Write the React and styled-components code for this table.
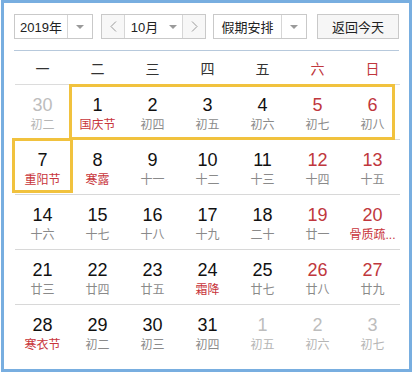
import React from "react";
import styled, { createGlobalStyle } from "styled-components";

const Global = createGlobalStyle`
  html, body { margin: 0; padding: 0; background: #fff; }
  body { font-family: "Liberation Sans", Arial, "Noto Sans CJK SC", sans-serif; }
`;

const Frame = styled.div`
  box-sizing: border-box;
  width: 411px;
  height: 372px;
  margin-left: 1px;
  border: 3px solid #78aee0;
  padding: 11px 10px 0 10px;
  background: #fff;
`;

const Toolbar = styled.div`
  display: flex;
  height: 25px;
  align-items: stretch;
`;

const Box = styled.div`
  box-sizing: border-box;
  display: flex;
  align-items: stretch;
  width: ${(p) => p.$w}px;
  margin-left: ${(p) => p.$ml || 0}px;
  border: 1px solid #c9c9c9;
  background: ${(p) => p.$bg || "#fff"};
  font-size: 13px;
  color: #222;
`;

const Label = styled.div`
  flex: 1;
  display: flex;
  align-items: center;
  justify-content: center;
`;

const Caret = styled.div`
  width: ${(p) => p.$w || 23}px;
  display: flex;
  align-items: center;
  justify-content: center;
  border-left: ${(p) => (p.$sep ? "1px solid #d6d6d6" : "none")};
  &::after {
    content: "";
    border-left: 4px solid transparent;
    border-right: 4px solid transparent;
    border-top: 4px solid #9a9a9a;
  }
`;

const Nav = styled.div`
  width: 22px;
  display: flex;
  align-items: center;
  justify-content: center;
  background: #f7f7f7;
  ${(p) => (p.$left ? "border-right: 1px solid #d6d6d6;" : "border-left: 1px solid #d6d6d6;")}
`;

const Divider = styled.div`
  height: 1px;
  background: #b7c9dc;
  margin-top: 11px;
`;

const Grid = styled.div`
  position: relative;
  display: grid;
  grid-template-columns: repeat(7, 55px);
  margin-left: 1px;
`;

const WeekHead = styled.div`
  height: 33px;
  display: flex;
  align-items: center;
  justify-content: center;
  font-size: 14px;
  color: ${(p) => (p.$red ? "#c0373d" : "#333")};
  border-bottom: 1px solid #dcdcdc;
`;

const Cell = styled.div`
  height: 55px;
  box-sizing: border-box;
  border-bottom: ${(p) => (p.$last ? "none" : "1px solid #d8d8d8")};
  display: flex;
  flex-direction: column;
  align-items: center;
  padding-top: 9px;
`;

const Num = styled.div`
  font-size: 18px;
  line-height: 22px;
  color: ${(p) => p.$c};
`;

const Lunar = styled.div`
  font-size: 12px;
  line-height: 16px;
  margin-top: 1px;
  color: ${(p) => p.$c};
  white-space: nowrap;
`;

const Highlight = styled.div`
  position: absolute;
  box-sizing: border-box;
  border: 3px solid #f1c23e;
  pointer-events: none;
`;

const weeks = ["一", "二", "三", "四", "五", "六", "日"];

const rows = [
  [["30", "初二", "o"], ["1", "国庆节", "f"], ["2", "初四"], ["3", "初五"], ["4", "初六"], ["5", "初七"], ["6", "初八"]],
  [["7", "重阳节", "f"], ["8", "寒露", "f"], ["9", "十一"], ["10", "十二"], ["11", "十三"], ["12", "十四"], ["13", "十五"]],
  [["14", "十六"], ["15", "十七"], ["16", "十八"], ["17", "十九"], ["18", "二十"], ["19", "廿一"], ["20", "骨质疏...", "f"]],
  [["21", "廿三"], ["22", "廿四"], ["23", "廿五"], ["24", "霜降", "f"], ["25", "廿七"], ["26", "廿八"], ["27", "廿九"]],
  [["28", "寒衣节", "f"], ["29", "初二"], ["30", "初三"], ["31", "初四"], ["1", "初五", "o"], ["2", "初六", "o"], ["3", "初七", "o"]],
];

export default function App() {
  return (
    <>
      <Global />
      <Frame>
        <Toolbar>
          <Box $w={79}>
            <Label>2019年</Label>
            <Caret $sep $w={24} />
          </Box>
          <Box $w={105} $ml={8}>
            <Nav $left>
              <svg width="7" height="11" viewBox="0 0 7 11"><path d="M6 0.5 L1 5.5 L6 10.5" fill="none" stroke="#999" strokeWidth="1" /></svg>
            </Nav>
            <Label>10月</Label>
            <Caret $w={18} />
            <Nav>
              <svg width="7" height="11" viewBox="0 0 7 11"><path d="M1 0.5 L6 5.5 L1 10.5" fill="none" stroke="#999" strokeWidth="1" /></svg>
            </Nav>
          </Box>
          <Box $w={94} $ml={7}>
            <Label>假期安排</Label>
            <Caret $sep $w={24} />
          </Box>
          <Box $w={82} $ml={10} $bg="#f6f6f6">
            <Label>返回今天</Label>
          </Box>
        </Toolbar>
        <Divider />
        <Grid>
          {weeks.map((w, i) => (
            <WeekHead key={w} $red={i >= 5}>{w}</WeekHead>
          ))}
          {rows.map((r, ri) =>
            r.map(([n, l, t], ci) => {
              const weekend = ci >= 5;
              const numC = t === "o" ? "#bdbdbd" : weekend ? "#c0373d" : "#111";
              const lunC = t === "o" ? "#b5b5b5" : t === "f" ? "#c8353b" : "#8a8a8a";
              return (
                <Cell key={ri + "-" + ci} $last={ri === rows.length - 1}>
                  <Num $c={numC}>{n}</Num>
                  <Lunar $c={lunC}>{l}</Lunar>
                </Cell>
              );
            })
          )}
          <Highlight style={{ left: 54, top: 33, width: 326, height: 56 }} />
          <Highlight style={{ left: -3, top: 87, width: 61, height: 55 }} />
        </Grid>
      </Frame>
    </>
  );
}
